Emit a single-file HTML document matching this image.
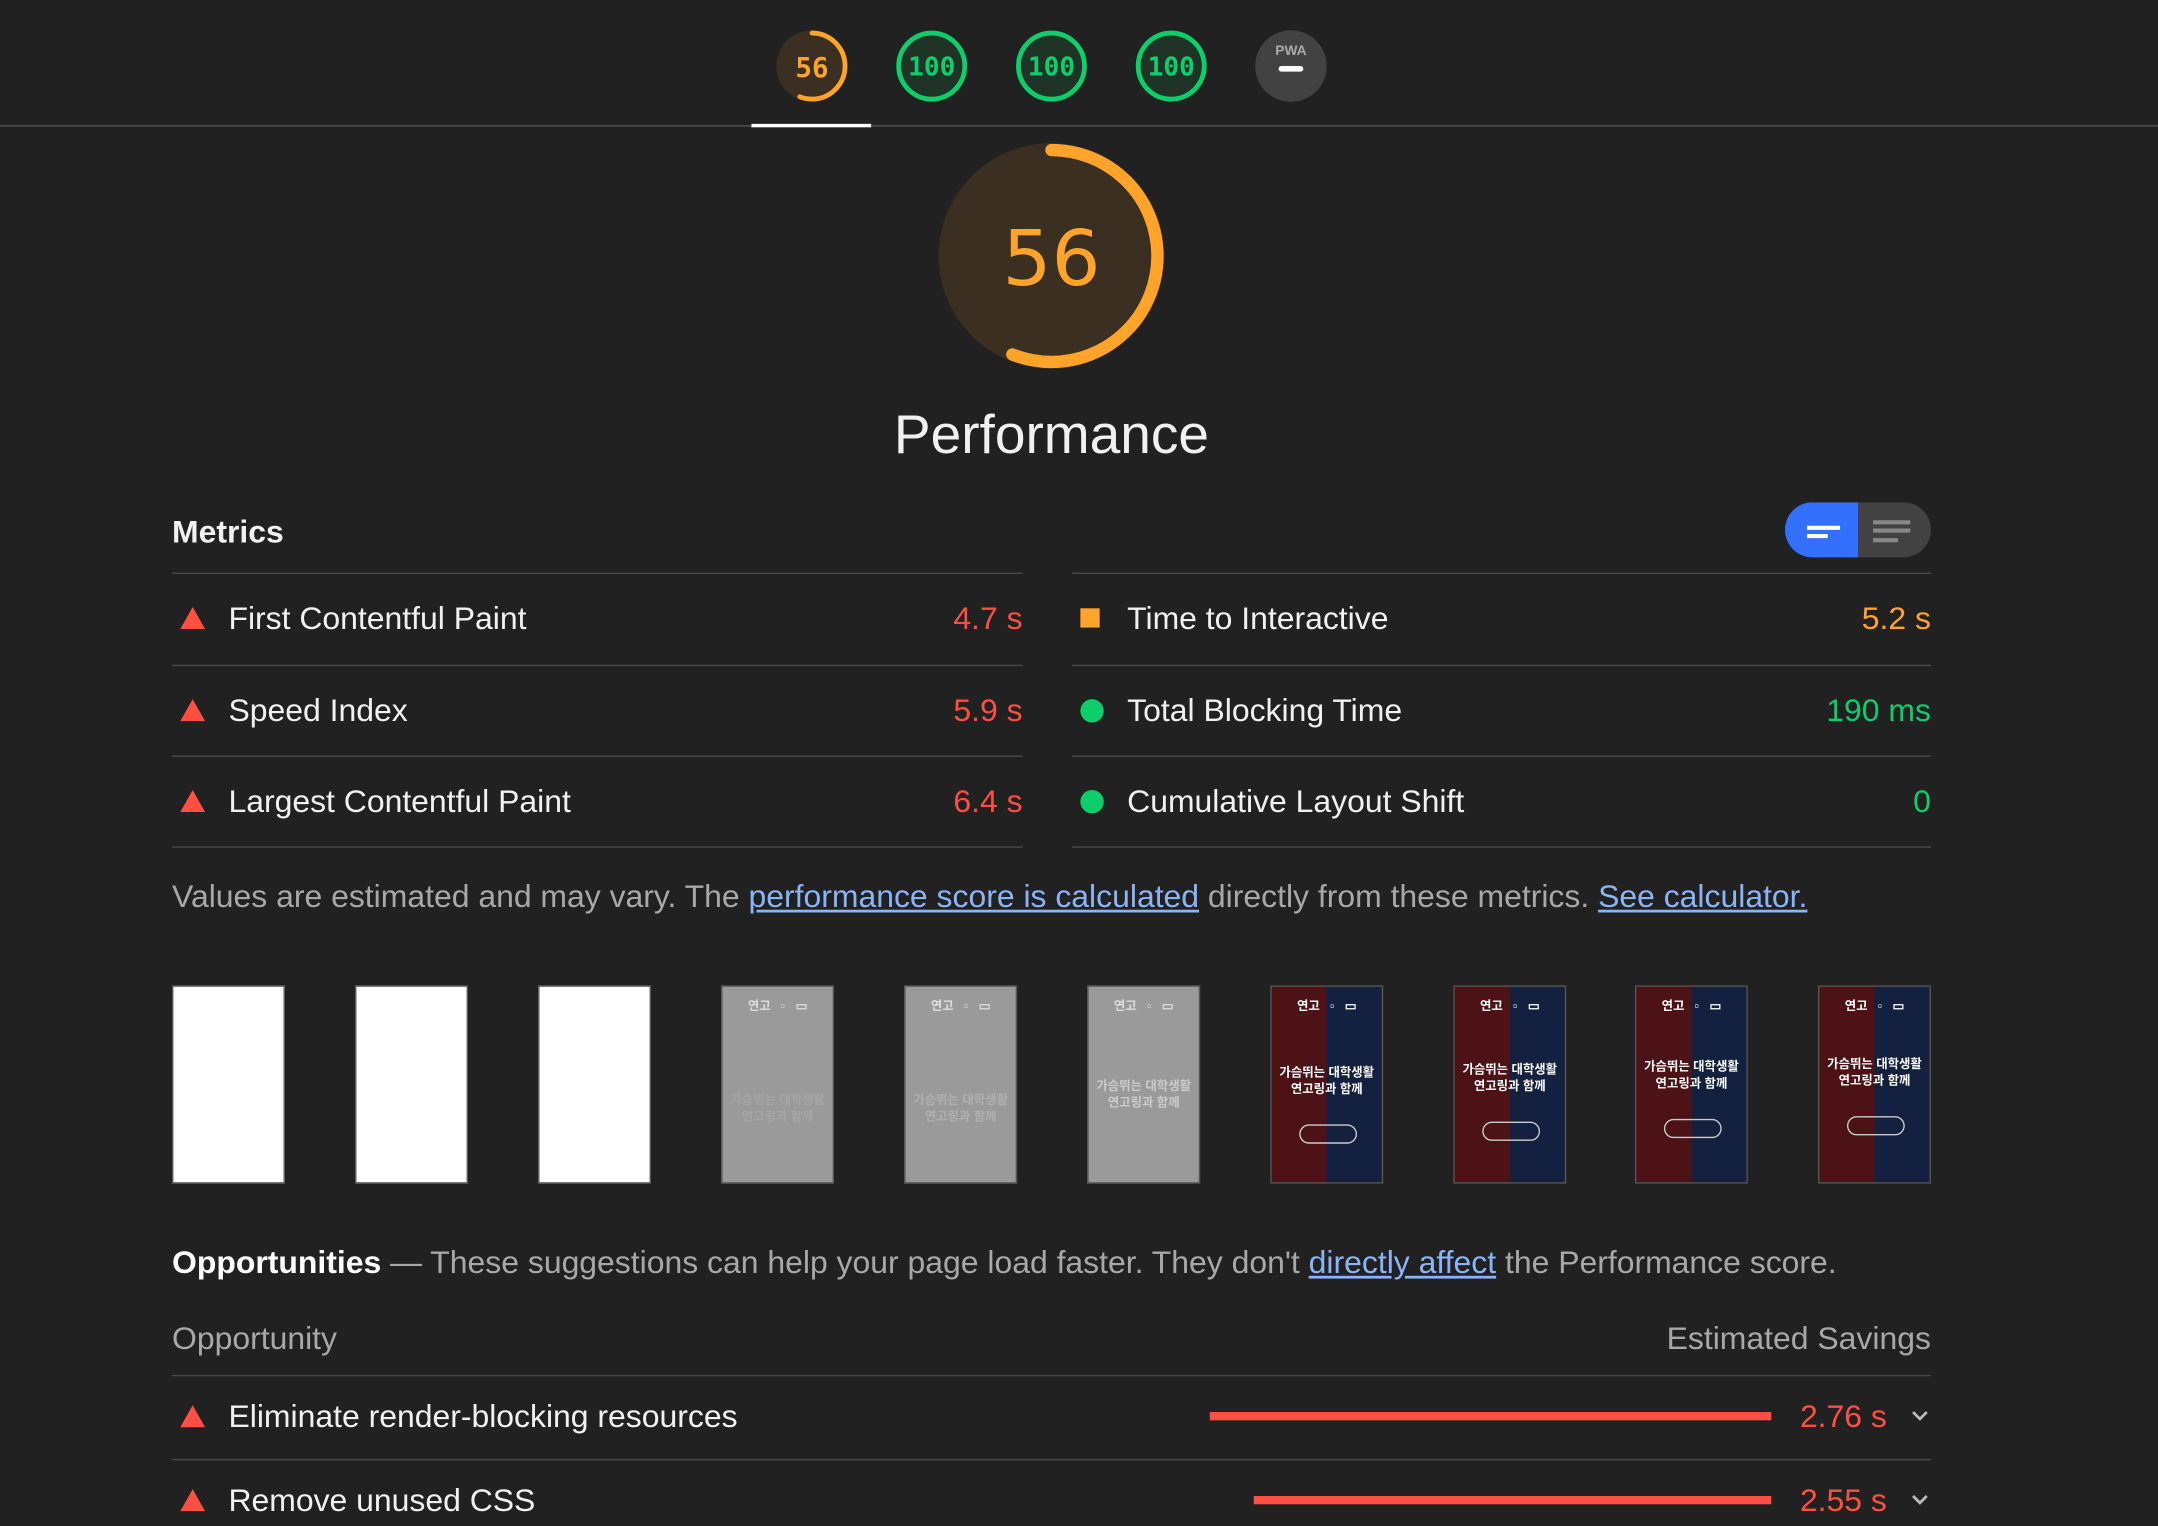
<!DOCTYPE html>
<html><head><meta charset="utf-8"><style>
html,body{margin:0;padding:0;background:#212121;width:2158px;height:1526px;overflow:hidden}
#w{position:absolute;left:0;top:0;width:1568px;height:1109px;transform:scale(1.37628);transform-origin:0 0;font-family:"Liberation Sans","Noto Sans CJK KR",sans-serif;color:#f1f1f1}
.a{position:absolute}
.t{position:absolute;font-size:23.2px;line-height:26px;white-space:nowrap}
.ln{position:absolute;height:1px;background:#4a4a4a}
.tri{position:absolute;width:0;height:0;border-left:9px solid transparent;border-right:9px solid transparent;border-bottom:16px solid #ff4e42}
.dot{position:absolute;width:17px;height:17px;border-radius:50%;background:#0cce6b}
.fr{position:absolute;top:716px;width:80px;height:142px;border:1px solid #555;overflow:hidden}
a{color:#8ab4f8;text-decoration:underline}
.ft{position:absolute;color:#fff;font-size:9px;line-height:12px;text-align:center;width:80px;left:0;font-weight:bold}
</style></head><body><div id="w">
<svg class="a" style="left:0;top:0" width="1568" height="100">
<circle cx="590" cy="48" r="26" fill="#3a2f20"/>
<circle cx="590" cy="48" r="24" fill="none" stroke="#ffa32a" stroke-width="3.5" stroke-dasharray="84.4 200" transform="rotate(-90 590 48)" stroke-linecap="round"/>
<text x="590" y="56" fill="#ffa32a" font-size="20" font-family="DejaVu Sans Mono,monospace" font-weight="bold" text-anchor="middle">56</text>
<g font-size="19" font-family="DejaVu Sans Mono,monospace" font-weight="bold" text-anchor="middle" fill="#0cce6b">
<circle cx="677" cy="48" r="24" fill="#1f3327" stroke="#0cce6b" stroke-width="3.5"/><text x="677" y="55">100</text>
<circle cx="764" cy="48" r="24" fill="#1f3327" stroke="#0cce6b" stroke-width="3.5"/><text x="764" y="55">100</text>
<circle cx="851" cy="48" r="24" fill="#1f3327" stroke="#0cce6b" stroke-width="3.5"/><text x="851" y="55">100</text>
</g>
<circle cx="938" cy="48" r="26" fill="#424242"/>
<text x="938" y="40" fill="#aaa" font-size="10" font-weight="bold" font-family="Liberation Sans,sans-serif" text-anchor="middle">PWA</text>
<rect x="929" y="48" width="18" height="4" rx="2" fill="#fff"/>
<rect x="0" y="91" width="1568" height="1" fill="#555"/>
<rect x="546" y="90" width="87" height="2.5" fill="#fff"/>
</svg>
<svg class="a" style="left:674px;top:96px" width="180" height="180">
<circle cx="90" cy="90" r="82" fill="#3a2f20"/>
<circle cx="90" cy="90" r="77" fill="none" stroke="#ffa32a" stroke-width="9" stroke-linecap="round" stroke-dasharray="270.9 600" transform="rotate(-90 90 90)"/>
<text x="90" y="111" fill="#ffa32a" font-size="56" font-family="DejaVu Sans,sans-serif" text-anchor="middle">56</text>
</svg>
<div class="t" style="left:0;width:1528px;text-align:center;top:292px;font-size:40px;line-height:48px">Performance</div>
<div class="t" style="left:125px;top:373px;font-weight:bold">Metrics</div>
<div class="a" style="left:1297px;top:365px;width:106px;height:40px;border-radius:20px;overflow:hidden;background:#424242">
<div class="a" style="left:0;top:0;width:53px;height:40px;background:#3370ff"></div>
<div class="a" style="left:16px;top:17px;width:24px;height:3px;background:#fff"></div>
<div class="a" style="left:16px;top:23px;width:15px;height:3px;background:#fff"></div>
<div class="a" style="left:64px;top:13px;width:27px;height:3px;background:#888"></div>
<div class="a" style="left:64px;top:19px;width:27px;height:3px;background:#888"></div>
<div class="a" style="left:64px;top:26px;width:18px;height:3px;background:#888"></div>
</div>
<div class="ln" style="left:125px;width:618px;top:416px"></div><div class="ln" style="left:779px;width:624px;top:416px"></div>
<div class="ln" style="left:125px;width:618px;top:483px"></div><div class="ln" style="left:779px;width:624px;top:483px"></div>
<div class="ln" style="left:125px;width:618px;top:549px"></div><div class="ln" style="left:779px;width:624px;top:549px"></div>
<div class="ln" style="left:125px;width:618px;top:615px"></div><div class="ln" style="left:779px;width:624px;top:615px"></div>
<div class="tri" style="left:131px;top:441px"></div><div class="t" style="left:166px;top:436px">First Contentful Paint</div><div class="t" style="right:825px;top:436px;color:#ff4e42">4.7 s</div>
<div class="tri" style="left:131px;top:508px"></div><div class="t" style="left:166px;top:503px">Speed Index</div><div class="t" style="right:825px;top:503px;color:#ff4e42">5.9 s</div>
<div class="tri" style="left:131px;top:574px"></div><div class="t" style="left:166px;top:569px">Largest Contentful Paint</div><div class="t" style="right:825px;top:569px;color:#ff4e42">6.4 s</div>
<div class="a" style="left:785px;top:442px;width:14px;height:14px;background:#ffa32a"></div><div class="t" style="left:819px;top:436px">Time to Interactive</div><div class="t" style="right:165px;top:436px;color:#ffa32a">5.2 s</div>
<div class="dot" style="left:785px;top:508px"></div><div class="t" style="left:819px;top:503px">Total Blocking Time</div><div class="t" style="right:165px;top:503px;color:#0cce6b">190 ms</div>
<div class="dot" style="left:785px;top:574px"></div><div class="t" style="left:819px;top:569px">Cumulative Layout Shift</div><div class="t" style="right:165px;top:569px;color:#0cce6b">0</div>
<div class="t" style="left:125px;top:638px;color:#a8a8a8">Values are estimated and may vary. The <a>performance score is calculated</a> directly from these metrics. <a>See calculator.</a></div>
<div class="fr" style="left:125px;background:#fff"></div>
<div class="fr" style="left:258px;background:#fff"></div>
<div class="fr" style="left:391px;background:#fff"></div>
<div class="fr" style="left:524px;background:#9a9a9a"><div class="ft" style="top:8px;color:#ddd">연고 &nbsp; ▫ &nbsp; ▭</div><div class="ft" style="top:76px;color:#a6a6a6">가슴뛰는 대학생활<br>연고링과 함께</div></div>
<div class="fr" style="left:657px;background:#9a9a9a"><div class="ft" style="top:8px;color:#ddd">연고 &nbsp; ▫ &nbsp; ▭</div><div class="ft" style="top:76px;color:#b0b0b0">가슴뛰는 대학생활<br>연고링과 함께</div></div>
<div class="fr" style="left:790px;background:#9a9a9a"><div class="ft" style="top:8px;color:#ddd">연고 &nbsp; ▫ &nbsp; ▭</div><div class="ft" style="top:66px;color:#ccc">가슴뛰는 대학생활<br>연고링과 함께</div></div>
<div class="fr" style="left:923px;background:linear-gradient(90deg,#4c1216 50%,#13203f 50%)"><div class="ft" style="top:8px">연고 &nbsp; ▫ &nbsp; ▭</div><div class="ft" style="top:56px">가슴뛰는 대학생활<br>연고링과 함께</div><div class="a" style="left:20px;top:100px;width:40px;height:12px;border:1px solid #ccc;border-radius:7px"></div></div>
<div class="fr" style="left:1056px;background:linear-gradient(90deg,#4c1216 50%,#13203f 50%)"><div class="ft" style="top:8px">연고 &nbsp; ▫ &nbsp; ▭</div><div class="ft" style="top:54px">가슴뛰는 대학생활<br>연고링과 함께</div><div class="a" style="left:20px;top:98px;width:40px;height:12px;border:1px solid #ccc;border-radius:7px"></div></div>
<div class="fr" style="left:1188px;background:linear-gradient(90deg,#4c1216 50%,#13203f 50%)"><div class="ft" style="top:8px">연고 &nbsp; ▫ &nbsp; ▭</div><div class="ft" style="top:52px">가슴뛰는 대학생활<br>연고링과 함께</div><div class="a" style="left:20px;top:96px;width:40px;height:12px;border:1px solid #ccc;border-radius:7px"></div></div>
<div class="fr" style="left:1321px;background:linear-gradient(90deg,#4c1216 50%,#13203f 50%)"><div class="ft" style="top:8px">연고 &nbsp; ▫ &nbsp; ▭</div><div class="ft" style="top:50px">가슴뛰는 대학생활<br>연고링과 함께</div><div class="a" style="left:20px;top:94px;width:40px;height:12px;border:1px solid #ccc;border-radius:7px"></div></div>
<div class="t" style="left:125px;top:904px;color:#a8a8a8"><b style="color:#fff">Opportunities</b> — These suggestions can help your page load faster. They don't <a>directly affect</a> the Performance score.</div>
<div class="t" style="left:125px;top:959px;color:#a8a8a8">Opportunity</div>
<div class="t" style="right:165px;top:959px;color:#a8a8a8">Estimated Savings</div>
<div class="ln" style="left:125px;width:1278px;top:999px"></div>
<div class="tri" style="left:131px;top:1021px"></div><div class="t" style="left:166px;top:1016px">Eliminate render-blocking resources</div>
<div class="a" style="left:879px;top:1026px;width:408px;height:6px;background:#ff4e42"></div>
<div class="t" style="right:197px;top:1016px;color:#ff4e42">2.76 s</div>
<svg class="a" style="left:1387px;top:1023px" width="16" height="12"><path d="M3 3 L8 8 L13 3" stroke="#bbb" stroke-width="2" fill="none"/></svg>
<div class="ln" style="left:125px;width:1278px;top:1060px"></div>
<div class="tri" style="left:131px;top:1082px"></div><div class="t" style="left:166px;top:1077px">Remove unused CSS</div>
<div class="a" style="left:911px;top:1087px;width:376px;height:6px;background:#ff4e42"></div>
<div class="t" style="right:197px;top:1077px;color:#ff4e42">2.55 s</div>
<svg class="a" style="left:1387px;top:1084px" width="16" height="12"><path d="M3 3 L8 8 L13 3" stroke="#bbb" stroke-width="2" fill="none"/></svg>
</div></body></html>
